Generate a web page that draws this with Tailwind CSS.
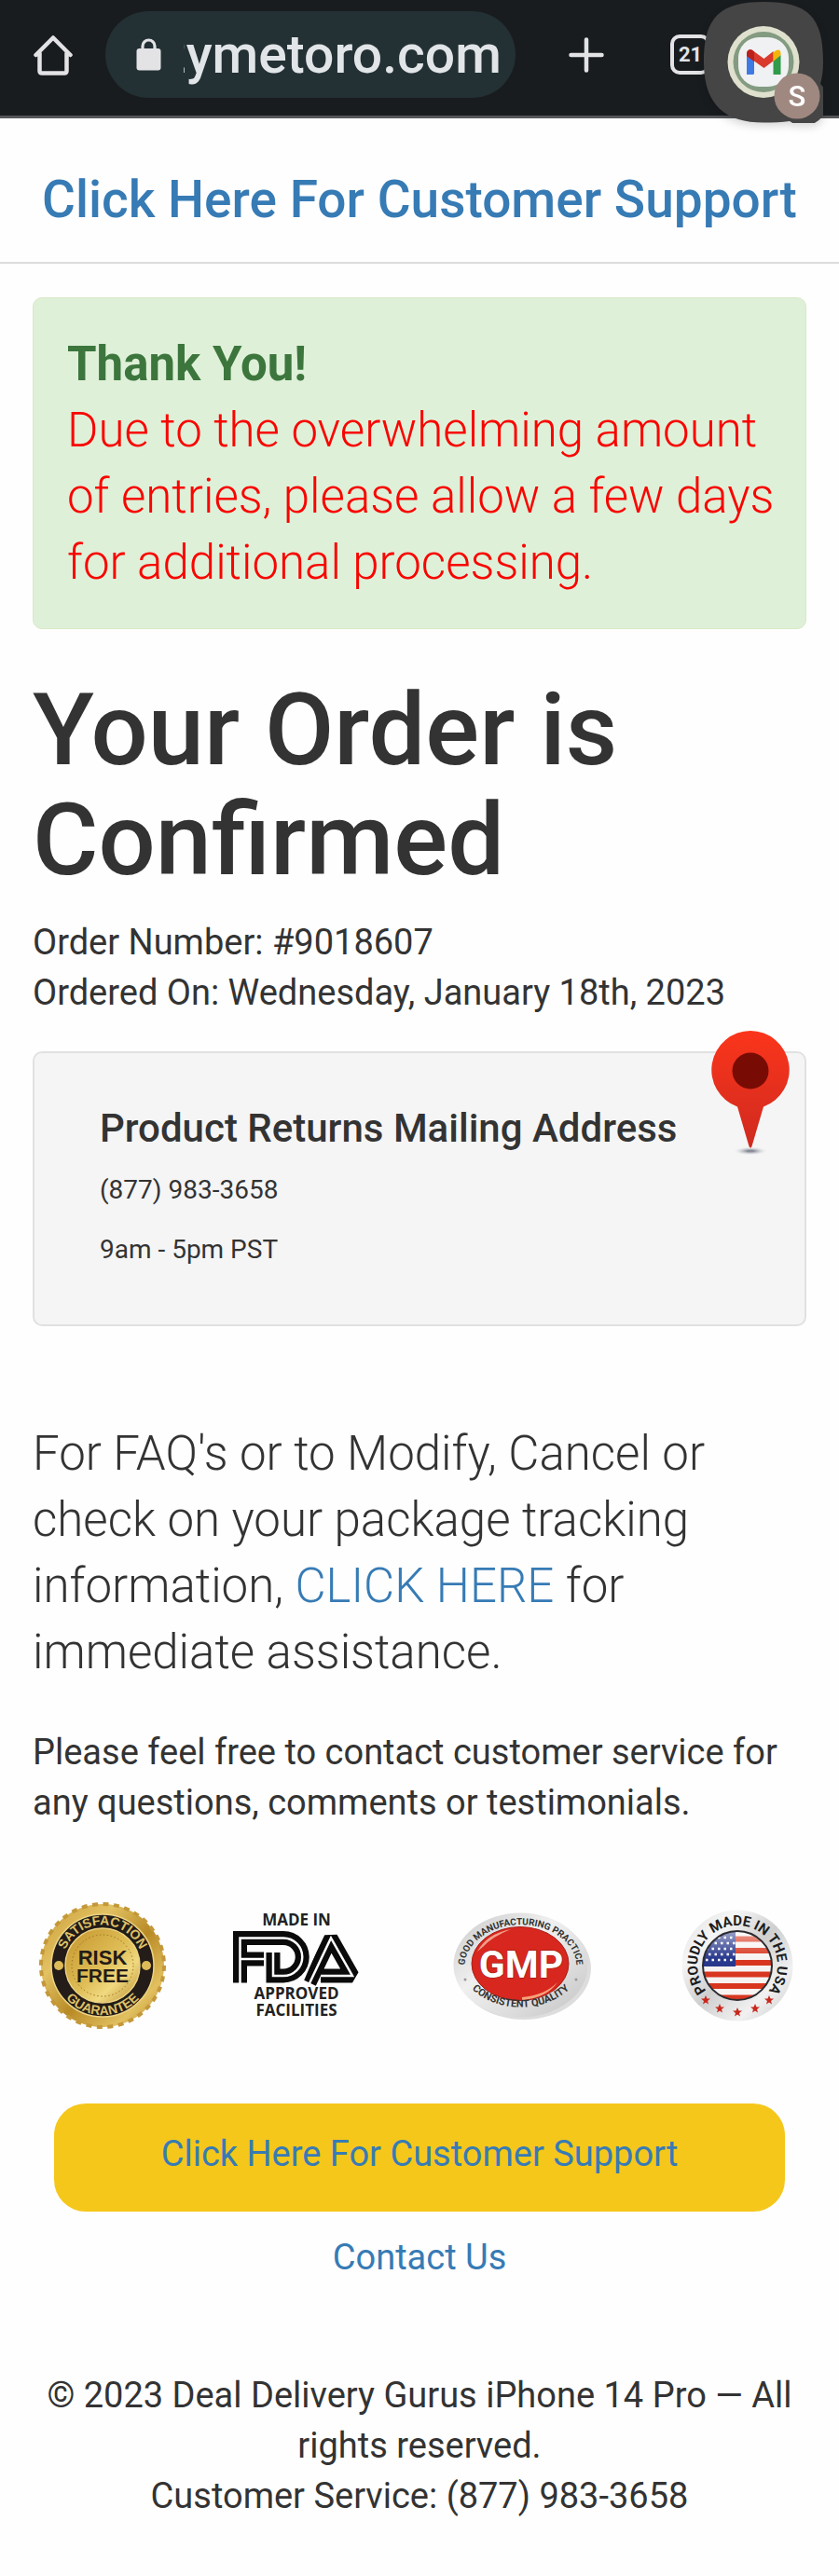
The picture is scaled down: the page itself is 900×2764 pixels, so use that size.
<!DOCTYPE html>
<html lang="en">
<head>
  <meta charset="UTF-8" />
  <meta name="viewport" content="width=device-width, initial-scale=1.0" />
  <script src="https://cdn.jsdelivr.net/npm/@tailwindcss/browser@4"></script>
  <title>Order Confirmed</title>
</head>
<body class="bg-[#fefefe] font-[Roboto,sans-serif] text-[38px] leading-[54px] text-[#333]">

  <!-- Browser bar -->
  <div class="relative flex items-center border-b-3 border-[#55575a] bg-[#191c1f] pt-3 pr-[138px] pb-[19px] pl-9">
    <button type="button" aria-label="Home" class="shrink-0">
      <svg class="block h-11 w-[42px]" viewBox="0 0 42 44" fill="none" stroke="#e3e3e6" stroke-width="4.5" stroke-linecap="round" stroke-linejoin="round">
        <path d="M2.500 22 21 3.500 39.500 22M6.500 20V39Q6.500 41.500 9 41.500H33Q35.500 41.500 35.500 39V20" />
      </svg>
    </button>
    <div class="ml-[35px] flex h-[93px] min-w-0 flex-1 items-center rounded-full bg-[#233034] pr-2 pl-[33px]">
      <svg class="block h-[35px] w-[27px] shrink-0" viewBox="0 0 27 35" aria-hidden="true">
        <rect x="0.500" y="11" width="26" height="23.500" rx="3" fill="#e3e3e6" />
        <path d="M7 13V8.500A6.500 6.500 0 0 1 20 8.500V13" fill="none" stroke="#e3e3e6" stroke-width="3.200" />
      </svg>
      <input type="text" aria-label="Address" value="zymetoro.com" class="ml-6 w-full min-w-0 bg-transparent indent-[-26px] text-[57px] leading-[70px] font-medium text-[#e1e5e8] outline-none" />
    </div>
    <button type="button" aria-label="New tab" class="ml-[57px] shrink-0">
      <svg class="block size-[38px]" viewBox="0 0 38 38" stroke="#e3e3e6" stroke-width="4.500" stroke-linecap="round">
        <path d="M19 2.500V35.500M2.500 19H35.500" />
      </svg>
    </button>
    <button type="button" aria-label="Open tabs" class="ml-[71px] h-[43px] w-[43px] shrink-0 rounded-[10px] border-4 border-[#e3e3e6] text-center text-[22px] leading-[34px] font-bold text-[#e3e3e6]">21</button>

    <!-- Floating mail bubble -->
    <button type="button" aria-label="Gmail" class="absolute top-[2px] right-[17px]">
      <svg class="block h-[130px] w-[128px] drop-shadow-lg" viewBox="0 0 128 130">
        <path d="M64 0C112 0 128 16 128 64Q128 78 125 88A26 26 0 0 1 92 128Q80 129.500 64 129.500C24 129.500 0 112 0 64C0 16 18 0 64 0Z" fill="#454545" />
        <circle cx="64" cy="64.500" r="38.500" fill="#dfe0ce" />
        <circle cx="64" cy="64.500" r="32.500" fill="#839b80" />
        <rect x="37" y="38" width="54" height="53" rx="22" fill="#f0f1f2" />
        <path d="M46 57V78H52.500Q54 78 54 76.500V60Z" fill="#3f7ae4" />
        <path d="M82.500 57V78H74.500V63Z" fill="#2f9b4b" />
        <path d="M74.500 54.500 77.500 52Q83 49.500 82.500 57L74.500 64Z" fill="#f3b50a" />
        <path d="M46 58V55Q47 50 51.500 51.500L64.500 61 74.500 53V63.500L64.500 71 54 63.500Z" fill="#d93a2c" />
        <path d="M46 58V55Q47 50 51.500 51.500L54 53.500V64Z" fill="#b8211c" />
        <circle cx="100" cy="101" r="24.500" fill="#9f8880" />
        <text x="100" y="112" text-anchor="middle" font-family="Roboto, sans-serif" font-size="31" font-weight="500" fill="#fff">S</text>
      </svg>
    </button>
  </div>

  <header class="border-b-2 border-[#dcdcdc] pt-12 pb-7 text-center text-[55px] leading-[78px] font-medium">
    <a href="#" class="whitespace-nowrap text-[#377bb5]">Click Here For Customer Support</a>
  </header>

  <main class="px-[35px] pt-9">
    <div class="rounded-[10px] border border-[#d6e9c6] bg-[#dff0d8] py-[35px] pr-6 pl-9 text-[51px] leading-[71px]">
      <strong class="block font-bold text-[#3c763d]">Thank You!</strong>
      <p class="font-light text-[#f80500]">Due to the overwhelming amount of entries, please allow a few days for additional processing.</p>
    </div>

    <h1 class="mt-[49px] text-[108px] leading-[118px] font-medium">Your Order is Confirmed</h1>

    <p class="mt-6">Order Number: #9018607<br />Ordered On: Wednesday, January 18th, 2023</p>

    <section class="relative mt-9 rounded-[10px] border-2 border-[#e1e1e1] bg-[#f5f5f5] px-[70px] pt-[57px] pb-[60px] text-[28px] leading-[41px]">
      <h2 class="text-[42px] leading-[47px] font-medium">Product Returns Mailing Address</h2>
      <p class="mt-[22px]">(877) 983-3658</p>
      <p class="mt-[23px]">9am - 5pm PST</p>
      <svg class="absolute -top-6 right-4 h-[136px] w-[84px]" viewBox="0 0 84 136" aria-hidden="true">
        <defs>
          <linearGradient id="pin" x1="0" y1="0" x2="0" y2="1">
            <stop offset="0" stop-color="#fb351b" />
            <stop offset="1" stop-color="#cf2a20" />
          </linearGradient>
          <radialGradient id="pinShadow">
            <stop offset="0.200" stop-color="#8a8d98" />
            <stop offset="1" stop-color="#e8e9ee" stop-opacity="0" />
          </radialGradient>
        </defs>
        <ellipse cx="42" cy="129" rx="18" ry="4.500" fill="url(#pinShadow)" />
        <path d="M42 0A42 42 0 0 1 56 81.500L43.500 124Q42 127 40.500 124L28 81.500A42 42 0 0 1 42 0Z" fill="url(#pin)" />
        <circle cx="42" cy="43" r="19.500" fill="#780c05" />
      </svg>
    </section>

    <p class="mt-[101px] text-[51px] leading-[71px] font-light">For FAQ's or to Modify, Cancel or check on your package tracking information, <a href="#" class="text-[#377bb5]">CLICK HERE</a> for immediate assistance.</p>

    <p class="mt-[45px]">Please feel free to contact customer service for any questions, comments or testimonials.</p>

    <!-- Trust badges -->
    <div class="mt-[79px] flex items-center justify-between pr-[14px] pl-[6px]">
      <svg class="h-[138px] w-[138px]" viewBox="0 0 138 138" role="img" aria-label="Satisfaction guarantee, risk free">
        <defs>
          <linearGradient id="gold" x1="0" y1="0" x2="1" y2="1">
            <stop offset="0" stop-color="#c99a35" />
            <stop offset="0.300" stop-color="#e3c263" />
            <stop offset="0.550" stop-color="#b88a26" />
            <stop offset="0.800" stop-color="#e2c05f" />
            <stop offset="1" stop-color="#b3842a" />
          </linearGradient>
          <linearGradient id="goldCore" x1="0" y1="0" x2="1" y2="1">
            <stop offset="0" stop-color="#c3942d" />
            <stop offset="0.500" stop-color="#dfbd56" />
            <stop offset="0.700" stop-color="#f0d980" />
            <stop offset="1" stop-color="#b58726" />
          </linearGradient>
          <path id="goldTop" d="M25.500 69A43.500 43.500 0 0 1 112.500 69" />
          <path id="goldBottom" d="M16 69A53 53 0 0 0 122 69" />
        </defs>
        <circle cx="69" cy="69" r="66" fill="url(#gold)" />
        <circle cx="69" cy="69" r="66" fill="none" stroke="#c3983a" stroke-width="4" stroke-dasharray="6 5.520" />
        <circle cx="69" cy="69" r="55" fill="#231c18" stroke="#ecd382" stroke-width="1.500" />
        <circle cx="69" cy="69" r="40" fill="url(#goldCore)" stroke="#ecd382" stroke-width="1.500" />
        <circle cx="69" cy="69" r="33" fill="none" stroke="#9c7424" stroke-width="1" stroke-dasharray="1.500 2.500" />
        <circle cx="22" cy="69" r="5" fill="#ddbb58" />
        <circle cx="116" cy="69" r="5" fill="#ddbb58" />
        <g font-family="Liberation Sans, sans-serif" font-weight="700" text-anchor="middle">
          <text font-size="14" fill="#dfc067"><textPath href="#goldTop" startOffset="50%">SATISFACTION</textPath></text>
          <text font-size="14" fill="#dfc067"><textPath href="#goldBottom" startOffset="50%">GUARANTEE</textPath></text>
          <text x="69" y="68" font-size="22" fill="#231c18">RISK</text>
          <text x="69" y="87" font-size="21" fill="#231c18">FREE</text>
        </g>
      </svg>

      <svg class="h-[124px] w-[166px]" viewBox="0 -5 166 124" role="img" aria-label="Made in FDA approved facilities">
        <g font-family="Open Sans, sans-serif" font-size="17" font-weight="700" fill="#222" text-anchor="middle">
          <text x="68" y="14">MADE IN</text>
          <text x="68" y="93">APPROVED</text>
          <text x="68" y="111">FACILITIES</text>
        </g>
        <g fill="none" stroke="#0b0b0b" stroke-width="15">
          <path d="M7.500 75.500V27.500H54A20 20 0 0 1 54 68H43V43M7.500 50H33" />
          <path d="M82 75.500 105 27.500 128 68H94" stroke-linejoin="bevel" />
        </g>
        <g fill="none" stroke="#fff" stroke-width="2.500">
          <path d="M7.500 76V27.500H54A20 20 0 0 1 54 68H43V42M7.500 50H34" />
          <path d="M82 76 105 27.500 128 68H94" />
          <path d="M74 76 98 20" stroke-width="1.500" />
        </g>
      </svg>

      <svg class="h-[122px] w-[174px]" viewBox="0 -4 174 122" role="img" aria-label="GMP, good manufacturing practice, consistent quality">
        <defs>
          <linearGradient id="silver" x1="0" y1="0" x2="1" y2="1">
            <stop offset="0" stop-color="#c9c9c9" />
            <stop offset="0.400" stop-color="#f0f0f0" />
            <stop offset="0.700" stop-color="#dcdcdc" />
            <stop offset="1" stop-color="#c2c2c2" />
          </linearGradient>
          <path id="gmpTop" d="M13 64A60 45 0 1 1 132 64" />
          <path id="gmpBottom" d="M6 56A67 52 0 0 0 139 56" />
        </defs>
        <ellipse cx="76" cy="60" rx="72" ry="55" fill="#ddd" />
        <ellipse cx="72.500" cy="56.500" rx="72" ry="56" fill="url(#silver)" />
        <ellipse cx="72" cy="55" rx="52" ry="39.500" fill="#d8271e" stroke="#a81d18" stroke-width="1" />
        <path d="M26 42Q36 23 62 18Q42 26 32 37Z" fill="#f0a08a" />
        <path d="M74 91Q98 89 112 75Q100 92 74 94Z" fill="#f6a27a" />
        <g font-weight="700" text-anchor="middle" font-family="Roboto, sans-serif">
          <text x="73" y="70" font-size="41" fill="#fff" stroke="#8d1712" stroke-width="1" paint-order="stroke">GMP</text>
          <text font-size="10" fill="#333"><textPath href="#gmpTop" startOffset="50%">GOOD MANUFACTURING PRACTICE</textPath></text>
          <text font-size="11" fill="#333"><textPath href="#gmpBottom" startOffset="50%">CONSISTENT QUALITY</textPath></text>
        </g>
        <circle cx="13" cy="72" r="1.500" fill="#999" />
        <circle cx="132" cy="72" r="1.500" fill="#999" />
      </svg>

      <svg class="h-[120px] w-[120px]" viewBox="0 0 120 120" role="img" aria-label="Proudly made in the USA">
        <defs>
          <linearGradient id="steel" x1="0" y1="0" x2="1" y2="1">
            <stop offset="0" stop-color="#dedede" />
            <stop offset="0.250" stop-color="#f6f6f6" />
            <stop offset="0.500" stop-color="#cfcfcf" />
            <stop offset="0.750" stop-color="#f1f1f1" />
            <stop offset="1" stop-color="#c8c8c8" />
          </linearGradient>
          <linearGradient id="shine" x1="0" y1="0" x2="0" y2="1">
            <stop offset="0" stop-color="#fff" stop-opacity="0.550" />
            <stop offset="0.400" stop-color="#fff" stop-opacity="0" />
          </linearGradient>
          <clipPath id="disc"><circle cx="60" cy="60" r="37" /></clipPath>
          <path id="usaArc" d="M60 103A43 43 0 1 1 60.100 103" />
          <path id="star" d="M0-5 1.500-1.500 5-1.500 2 1 3 4.500 0 2.500-3 4.500-2 1-5-1.500-1.500-1.500Z" />
        </defs>
        <circle cx="60" cy="60" r="59.500" fill="url(#steel)" />
        <g clip-path="url(#disc)">
          <rect x="22" y="22" width="76" height="76" fill="#f7f3f2" />
          <path d="M22 31.500H98M22 44H98M22 57H98M22 69.500H98M22 82H98M22 94.500H98" stroke="#d8361f" stroke-width="6" />
          <rect x="22" y="22" width="36" height="39" fill="#28388c" />
          <path d="M26 30H58M29 36H58M26 42H58M29 48H58M26 54H58" stroke="#fff" stroke-width="2.500" stroke-dasharray="2.500 4" />
          <rect x="22" y="22" width="76" height="76" fill="url(#shine)" />
        </g>
        <circle cx="60" cy="60" r="37" fill="none" stroke="#2b2b30" stroke-width="2" />
        <text font-family="Roboto, sans-serif" font-size="15" font-weight="700" fill="#1d1d1d" text-anchor="middle"><textPath href="#usaArc" startOffset="50%">PROUDLY MADE IN THE USA</textPath></text>
        <g fill="#c8281d">
          <use href="#star" x="26" y="97" />
          <use href="#star" x="41" y="106" />
          <use href="#star" x="60" y="110" />
          <use href="#star" x="79" y="106" />
          <use href="#star" x="94" y="97" />
        </g>
      </svg>
    </div>

    <div class="mt-[79px] px-[23px] text-center">
      <a href="#" class="block rounded-[34px] bg-[#f5c71a] pt-[27px] pb-[35px] text-[#377bb5]">Click Here For Customer Support</a>
      <a href="#" class="mt-[22px] inline-block text-[#377bb5]">Contact Us</a>
    </div>
  </main>

  <footer class="px-9 pt-[94px] pb-[57px] text-center">
    <p>© 2023 Deal Delivery Gurus iPhone 14 Pro — All rights reserved.</p>
    <p>Customer Service: (877) 983-3658</p>
  </footer>
</body>
</html>
